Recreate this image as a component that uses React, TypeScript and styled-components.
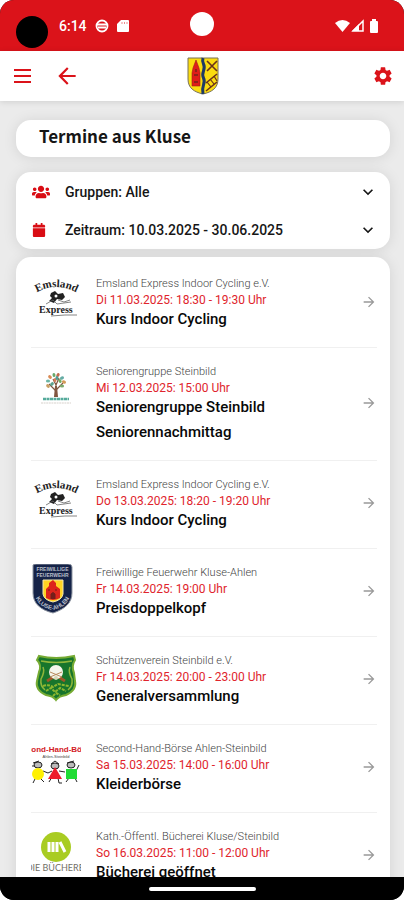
import React from "react";
import styled, { createGlobalStyle } from "styled-components";
import { MdArrowBack, MdArrowForward, MdSettings, MdExpandMore } from "react-icons/md";
import { FaUsers, FaCalendar } from "react-icons/fa";

const RED = "#db131a";

const GlobalStyle = createGlobalStyle`
  * { box-sizing: border-box; }
  body { margin: 0; background: #fff; font-family: Roboto, "Liberation Sans", sans-serif; color: #161616; }
  button { border: 0; background: none; padding: 0; font: inherit; color: inherit; cursor: pointer; }
  svg { display: block; flex: none; }
`;

const Screen = styled.div`
  height: 100vh;
  display: flex;
  flex-direction: column;
  overflow: hidden;
  border-radius: 14px;
  background: #000;
`;

const StatusBar = styled.div`
  flex: none;
  height: 51px;
  padding: 0 16px;
  display: grid;
  grid-template-columns: 1fr auto 1fr;
  align-items: center;
  background: ${RED};
  color: #fff;
`;

const StatusGroup = styled.div<{ $end?: boolean }>`
  display: flex;
  align-items: center;
  justify-content: ${(p) => (p.$end ? "flex-end" : "flex-start")};
  gap: ${(p) => (p.$end ? 1 : 8)}px;
  padding-right: ${(p) => (p.$end ? 9 : 0)}px;
`;

const Dot = styled.span<{ $size: number; $color: string; $drop?: number }>`
  width: ${(p) => p.$size}px;
  height: ${(p) => p.$size}px;
  border-radius: 50%;
  background: ${(p) => p.$color};
  margin-top: ${(p) => p.$drop ?? 0}px;
`;

const Clock = styled.span`
  margin-left: 3px;
  font-size: 14px;
  line-height: 20px;
  font-weight: 500;
`;

const AppBar = styled.header`
  flex: none;
  height: 50px;
  padding: 0 8px 0 10px;
  display: grid;
  grid-template-columns: 1fr auto 1fr;
  align-items: center;
  background: #fff;
  color: ${RED};
  box-shadow: 0 1px 6px rgba(0, 0, 0, 0.12);
  z-index: 1;
`;

const AppBarSide = styled.div<{ $end?: boolean }>`
  display: flex;
  align-items: center;
  justify-content: ${(p) => (p.$end ? "flex-end" : "flex-start")};
  gap: 18px;
`;

const IconButton = styled.button`
  display: grid;
  place-items: center;
  width: 26px;
  height: 40px;
`;

const Content = styled.main`
  flex: 1;
  min-height: 0;
  overflow: hidden;
  padding: 19px 14px 0 16px;
  background: #ebebeb;
`;

const Card = styled.section`
  background: #fff;
  border-radius: 15px;
  box-shadow: 0 1px 14px rgba(0, 0, 0, 0.1);
`;

const TitleCard = styled(Card)`
  padding: 2px 23px 7px;
  margin-bottom: 15px;
`;

const PageTitle = styled.h1`
  margin: 0;
  font-family: "Noto Sans CJK JP", "Noto Sans", sans-serif;
  font-size: 17px;
  line-height: 28px;
  font-weight: 700;
`;

const FilterCard = styled(Card)`
  margin-bottom: 8px;
`;

const FilterButton = styled.button`
  display: grid;
  grid-template-columns: 33px 1fr 24px;
  align-items: center;
  width: 100%;
  height: 39px;
  padding: 0 8px 0 16px;
  text-align: left;
  font-size: 14px;
  font-weight: 500;

  & + & { height: 38px; }
  & > svg:first-child { color: #d90d14; }
`;

const EventCard = styled(Card)`
  padding: 3px 13px 0 15px;
`;

const EventList = styled.ul`
  list-style: none;
  margin: 0;
  padding: 0;
`;

const EventItem = styled.li`
  border-bottom: 1px solid #f0f0f0;
`;

const EventLink = styled.a`
  display: grid;
  grid-template-columns: 50px 1fr 16px;
  column-gap: 15px;
  align-items: center;
  padding: 15px 0 18px;
  color: inherit;
  text-decoration: none;
  & > svg:first-child { align-self: start; }
`;

const Organizer = styled.div`
  font-size: 11px;
  line-height: 17px;
  font-weight: 300;
  color: #444;
`;

const When = styled.div`
  font-size: 12px;
  line-height: 17px;
  color: #e0242c;
`;

const EventTitles = styled.div`
  display: flex;
  flex-direction: column;
  gap: 5px;
  font-size: 15px;
  line-height: 20px;
  font-weight: 500;
  color: #080808;
`;

const HomeBar = styled.div`
  flex: none;
  height: 23px;
  display: grid;
  place-items: center;
  background: #000;
`;

const HomeHandle = styled.span`
  width: 107px;
  height: 4px;
  border-radius: 2px;
  background: #fff;
`;

const Crest = () => (
  <svg width="32" height="38" viewBox="0 0 32 38" aria-label="Wappen Kluse">
    <path d="M1 1H31V22C31 31 25 35 16 37C7 35 1 31 1 22Z" fill="#fbdc10" stroke="#77715a" />
    <path d="M9 3L12 11L13 16V29H5V16L6 11Z" fill="#df1d19" stroke="#9b201a" strokeWidth=".6" />
    <path d="M7 18h4M7 25h4M9 12v3" stroke="#762319" strokeWidth="1.5" />
    <path d="M16 1Q15 4 16.500 7T16.500 14T16.500 21T16.500 28T16 37" fill="none" stroke="#1e3a66" strokeWidth="3" />
    <g fill="none" stroke="#69321b" strokeWidth="1.600">
      <path d="M20 4L30 14M30 4L20 14M19 26L30 17M19 34L30 25" />
      <path d="M20 25L24 30M23 22L27 27M27 19L30 24" strokeWidth="1.2" />
    </g>
  </svg>
);

const EmslandLogo = () => (
  <svg width="50" height="50" viewBox="0 0 50 50" aria-hidden="true">
    <path id="emsland-arc" d="M3 19Q25 5 48 19" fill="none" />
    <g fill="#222" fontFamily="Liberation Serif, serif" fontWeight="700">
      <text fontSize="11" textAnchor="middle">
        <textPath href="#emsland-arc" startOffset="50%">Emsland</textPath>
      </text>
      <text x="8" y="38" fontSize="10">Express</text>
    </g>
    <path d="M20 18l4-2 3 3 5-1 2 4-3 3-5-1-3 4-5-2 3-3-2-2z" fill="#222" />
    <path d="M15 29l7-4 4 4 14-2M27 25l6 2 6-2M20 41l14-1 12 0" fill="none" stroke="#666" strokeWidth=".8" />
    <circle cx="25" cy="21" r="1.500" fill="#fff" />
  </svg>
);

const leaves = [
  [17, 18, "#6bb5a4"], [19, 14, "#d98a55"], [23, 12, "#68a96b"], [27, 12, "#c16b4c"], [31, 15, "#65aca5"],
  [33, 19, "#d49a58"], [29, 18, "#76aa65"], [24, 17, "#d67d59"], [21, 21, "#5fa391"], [31, 23, "#7ba96c"],
  [17, 23, "#c99f63"], [26, 15, "#4f9d93"],
] as const;

const TreeLogo = () => (
  <svg width="50" height="50" viewBox="0 0 50 50" aria-hidden="true">
    <path d="M25 33V20M25 28L18 21M25 27L32 20M25 22L22 16M25 22L28 15" fill="none" stroke="#815641" strokeWidth="1.200" />
    <path d="M23 34L24 23h2l1 11z" fill="#815641" />
    {leaves.map(([x, y, c], i) => (
      <ellipse key={i} cx={x} cy={y} rx="2.100" ry="1.500" fill={c} transform={`rotate(${i * 40} ${x} ${y})`} />
    ))}
    <path d="M12 36H38" stroke="#55aa9b" strokeWidth="2.400" strokeDasharray="3 .5" />
    <path d="M10 40H40" stroke="#d8d2cc" strokeWidth="1.200" strokeDasharray="2 .6" />
  </svg>
);

const FireLogo = () => (
  <svg width="50" height="50" viewBox="0 0 50 50" aria-hidden="true">
    <path d="M2 1Q3 0 5 0H37Q41 0 41 3V29C41 39 34 45 22 49C10 46 2 40 2 29Z" fill="#152348" stroke="#9198a3" />
    <g fill="#b9bfcb" fontFamily="Liberation Sans, sans-serif" fontWeight="700" fontSize="5" textAnchor="middle">
      <text x="21.500" y="7">FREIWILLIGE</text>
      <text x="21.500" y="13">FEUERWEHR</text>
      <path id="kluse-arc" d="M4 32Q8 44 22 46Q36 43 39 32" fill="none" />
      <text fontSize="6"><textPath href="#kluse-arc" startOffset="50%">KLUSE-AHLEN</textPath></text>
    </g>
    <path d="M12 16H32V30Q31 36 22 38Q13 36 12 30Z" fill="#ffd323" stroke="#f4e8b1" />
    <path d="M15 34V25L18 22V19L22 16L25 19V22L29 25V34Q22 38 15 34Z" fill="#dd251c" />
    <path d="M20 35V30Q22 27 24 30V35M18 25v2M25 25v2" fill="#751f1b" stroke="#751f1b" />
  </svg>
);

const ShieldLogo = () => (
  <svg width="50" height="50" viewBox="0 0 50 50" aria-hidden="true">
    <path d="M8 4Q25 8 43 4L44 8Q40 14 43 21L44 29Q46 38 35 43Q28 44 25 48Q22 44 15 43Q4 38 6 29L8 20Q11 13 6 8Z" fill="#17752c" stroke="#76ab33" strokeWidth="2" />
    <path d="M10 9Q25 12 41 9M12 15Q14 20 10 27Q9 34 14 38M39 15Q37 20 41 27Q42 34 37 38" fill="none" stroke="#8fb63b" strokeWidth="1.500" />
    <path d="M16 29L24 24M34 29L26 24" stroke="#9b5729" strokeWidth="3" />
    <circle cx="25" cy="20" r="7" fill="#f5f5eb" />
    <path d="M19 25l12-5M31 25l-12-5" stroke="#b88a5c" strokeWidth="1" />
    <path d="M12 34Q18 32 22 35L27 32L38 34M15 39L20 36L24 40L29 36L35 39M22 44l3-3 4 2" fill="none" stroke="#8db62f" strokeWidth="2" strokeDasharray="3 1" />
    <circle cx="25" cy="26" r="2" fill="#d6d5b4" />
  </svg>
);

const KidsLogo = () => (
  <svg width="50" height="50" viewBox="0 0 50 50" aria-hidden="true">
    <text x="25" y="12" fill="#d31925" fontFamily="Liberation Sans, sans-serif" fontWeight="700" fontSize="8" textAnchor="middle">cond-Hand-Bör</text>
    <text x="25" y="18" fill="#444" fontFamily="Liberation Sans, sans-serif" fontSize="4" textAnchor="middle">Ahlen-Steinbild</text>
    <g fill="#bbb" stroke="#222" strokeWidth="1">
      <ellipse cx="7" cy="25" rx="4" ry="3" /><ellipse cx="24" cy="26" rx="4" ry="3" /><ellipse cx="40" cy="25" rx="4" ry="3" />
      <path d="M2 23l6-2M1 26h3M20 24l4-3 4 3M36 23l7-2M12 31l5 2 4-2M28 31l6 1M45 31l3-6M4 39l-2 4M10 39l3 3M21 37l-3 5M27 38l1 5h3M38 38l-3 4M44 38l2 4" fill="none" />
    </g>
    <circle cx="7" cy="34" r="6" fill="#fff000" />
    <path d="M24 27L31 39H17Z" fill="#ed1c2b" />
    <path d="M35 29H46V39H35Z" fill="#20dc35" />
  </svg>
);

const BooksLogo = () => (
  <svg width="50" height="50" viewBox="0 0 50 50" aria-hidden="true">
    <circle cx="25" cy="19" r="15" fill="#a9cc22" />
    <path d="M18 14v10M22 14v10M26 14v10M29 14l5 10" stroke="#fff" strokeWidth="3" />
    <text x="25" y="43" fill="#716f66" fontFamily="Lato, sans-serif" fontSize="9" textAnchor="middle">DIE BÜCHEREI</text>
  </svg>
);

type EventEntry = { logo: React.ReactNode; org: string; when: string; titles: string[] };

const events: EventEntry[] = [
  { logo: <EmslandLogo />, org: "Emsland Express Indoor Cycling e.V.", when: "Di 11.03.2025: 18:30 - 19:30 Uhr", titles: ["Kurs Indoor Cycling"] },
  { logo: <TreeLogo />, org: "Seniorengruppe Steinbild", when: "Mi 12.03.2025: 15:00 Uhr", titles: ["Seniorengruppe Steinbild", "Seniorennachmittag"] },
  { logo: <EmslandLogo />, org: "Emsland Express Indoor Cycling e.V.", when: "Do 13.03.2025: 18:20 - 19:20 Uhr", titles: ["Kurs Indoor Cycling"] },
  { logo: <FireLogo />, org: "Freiwillige Feuerwehr Kluse-Ahlen", when: "Fr 14.03.2025: 19:00 Uhr", titles: ["Preisdoppelkopf"] },
  { logo: <ShieldLogo />, org: "Schützenverein Steinbild e.V.", when: "Fr 14.03.2025: 20:00 - 23:00 Uhr", titles: ["Generalversammlung"] },
  { logo: <KidsLogo />, org: "Second-Hand-Börse Ahlen-Steinbild", when: "Sa 15.03.2025: 14:00 - 16:00 Uhr", titles: ["Kleiderbörse"] },
  { logo: <BooksLogo />, org: "Kath.-Öffentl. Bücherei Kluse/Steinbild", when: "So 16.03.2025: 11:00 - 12:00 Uhr", titles: ["Bücherei geöffnet"] },
];

export default function App() {
  return (
    <>
      <GlobalStyle />
      <Screen>
        <StatusBar>
          <StatusGroup>
            <Dot $size={32} $color="#000" $drop={12} />
            <Clock>6:14</Clock>
            <svg width="14" height="14" viewBox="0 0 14 14" fill="none" stroke="#fff" strokeWidth="1.800">
              <circle cx="7" cy="7" r="5.500" />
              <path d="M2 5.500H12M3 8.500H11" />
            </svg>
            <svg width="12" height="13" viewBox="0 0 12 13">
              <path d="M4 1H11Q12 1 12 2V12Q12 13 11 13H1Q0 13 0 12V5Z" fill="#fff" />
              <path d="M5 3v2M7.500 3v2M10 3v2" stroke={RED} strokeWidth=".5" />
            </svg>
          </StatusGroup>
          <Dot $size={24} $color="#fff" $drop={-3} />
          <StatusGroup $end>
            <svg width="15" height="12" viewBox="0 0 15 12"><path d="M0 3Q7.500-3 15 3L7.500 12Z" fill="#fff" /></svg>
            <svg width="13" height="13" viewBox="0 0 13 13">
              <path d="M12 2V12H2Z" fill="none" stroke="#fff" strokeWidth="1.500" />
              <path d="M8 5V12H1Z" fill="#fff" />
            </svg>
            <svg width="14" height="14" viewBox="0 0 14 14"><path d="M7 0H11V2H12Q13 2 13 3V13Q13 14 12 14H6Q5 14 5 13V3Q5 2 6 2H7Z" fill="#fff" /></svg>
          </StatusGroup>
        </StatusBar>

        <AppBar>
          <AppBarSide>
            <IconButton aria-label="Menü">
              <svg width="18" height="16" viewBox="0 0 18 16" stroke="currentColor" strokeWidth="2"><path d="M0 2H17M0 8H17M0 14H17" /></svg>
            </IconButton>
            <IconButton aria-label="Zurück"><MdArrowBack size={26} /></IconButton>
          </AppBarSide>
          <Crest />
          <AppBarSide $end>
            <IconButton aria-label="Einstellungen"><MdSettings size={22} /></IconButton>
          </AppBarSide>
        </AppBar>

        <Content>
          <TitleCard><PageTitle>Termine aus Kluse</PageTitle></TitleCard>
          <FilterCard>
            <FilterButton>
              <FaUsers size={18} />
              <span>Gruppen: Alle</span>
              <MdExpandMore size={20} />
            </FilterButton>
            <FilterButton>
              <FaCalendar size={14} />
              <span>Zeitraum: 10.03.2025 - 30.06.2025</span>
              <MdExpandMore size={20} />
            </FilterButton>
          </FilterCard>
          <EventCard>
            <EventList>
              {events.map((e, i) => (
                <EventItem key={i}>
                  <EventLink href="#">
                    {e.logo}
                    <div>
                      <Organizer>{e.org}</Organizer>
                      <When>{e.when}</When>
                      <EventTitles>{e.titles.map((t) => <span key={t}>{t}</span>)}</EventTitles>
                    </div>
                    <MdArrowForward size={16} color="#999" />
                  </EventLink>
                </EventItem>
              ))}
            </EventList>
          </EventCard>
        </Content>

        <HomeBar><HomeHandle /></HomeBar>
      </Screen>
    </>
  );
}
